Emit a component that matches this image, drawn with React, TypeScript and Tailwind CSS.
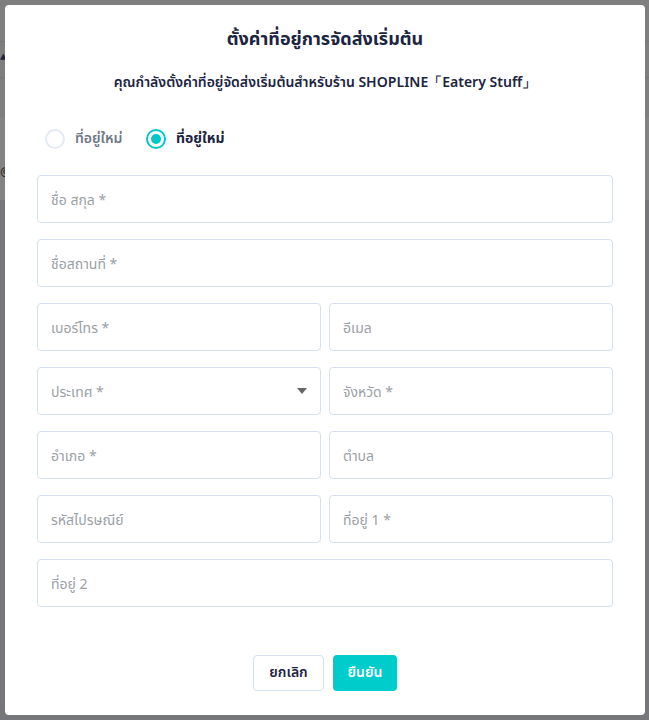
const inputCls =
  "h-12 w-full rounded border border-[#d5e0ef] bg-white px-[13px] pt-[3px] text-sm text-[#1f2a44] placeholder:text-[#9b9fa6] outline-none";

const Field = ({ label }: { label: string }) => (
  <input className={inputCls} placeholder={label} />
);

const App = () => {
  return (
    <div
      className="relative h-[720px] w-full overflow-hidden bg-[#76777b]"
      style={{ fontFamily: '"Noto Sans Thai", "Noto Sans", "Liberation Sans", sans-serif' }}
    >
      {/* page behind the overlay */}
      <div className="h-[117px] bg-[#7e7e7e]">
        <div className="h-[41px]" />
        <div className="h-[37px] border-y border-[#767676] pt-[8px] text-[13px] leading-none text-[#1b2440]">▴</div>
      </div>
      <div className="h-[83px] bg-[#838383] px-0 pt-[46px] text-[13px] text-[#222]">@</div>

      {/* modal */}
      <div className="absolute left-[5px] top-[5px] flex h-[710px] w-[640px] flex-col rounded bg-white px-8 pt-[21px] pb-6">
        <h2 className="text-center text-lg font-bold leading-7 text-[#1b2440]">
          ตั้งค่าที่อยู่การจัดส่งเริ่มต้น
        </h2>
        <p className="mt-[19px] text-center text-sm font-semibold leading-5 text-[#1b2440]">
          คุณกำลังตั้งค่าที่อยู่จัดส่งเริ่มต้นสำหรับร้าน SHOPLINE「Eatery Stuff」
        </p>

        <div className="mt-9 flex items-center pl-2">
          <label className="flex items-center gap-[10px]">
            <span className="h-5 w-5 rounded-full border-2 border-[#e3eaf3]" />
            <span className="w-[54px] text-sm font-semibold text-[#6e7687]">ที่อยู่ใหม่</span>
          </label>
          <label className="ml-[17px] flex items-center gap-[10px]">
            <span className="flex h-5 w-5 items-center justify-center rounded-full border-2 border-[#00c8c8]">
              <span className="h-[10px] w-[10px] rounded-full bg-[#00c8c8]" />
            </span>
            <span className="text-sm font-bold text-[#1b2440]">ที่อยู่ใหม่</span>
          </label>
        </div>

        <div className="mt-[26px] grid grid-cols-2 gap-x-2 gap-y-4">
          <div className="col-span-2">
            <Field label="ชื่อ สกุล *" />
          </div>
          <div className="col-span-2">
            <Field label="ชื่อสถานที่ *" />
          </div>
          <Field label="เบอร์โทร *" />
          <Field label="อีเมล" />
          <div className="relative">
            <Field label="ประเทศ *" />
            <span className="pointer-events-none absolute right-[14px] top-[21px] h-0 w-0 border-x-[5px] border-t-[6px] border-x-transparent border-t-[#666]" />
          </div>
          <Field label="จังหวัด *" />
          <Field label="อำเภอ *" />
          <Field label="ตำบล" />
          <Field label="รหัสไปรษณีย์" />
          <Field label="ที่อยู่ 1 *" />
          <div className="col-span-2">
            <Field label="ที่อยู่ 2" />
          </div>
        </div>

        <div className="mt-12 flex justify-center gap-[9px]">
          <button className="h-9 w-[71px] rounded border border-[#d5e0ef] bg-white text-sm font-semibold text-[#1b2440]">
            ยกเลิก
          </button>
          <button className="h-9 w-16 rounded bg-[#00cccc] text-sm font-semibold text-white">
            ยืนยัน
          </button>
        </div>
      </div>
    </div>
  );
};

export default App;
